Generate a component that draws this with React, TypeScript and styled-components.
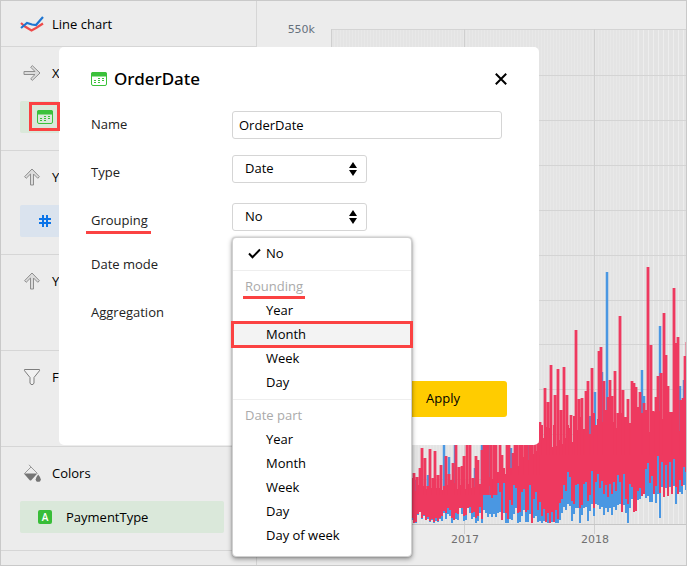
import React, { useState } from "react";
import styled, { createGlobalStyle, css } from "styled-components";

const GlobalStyle = createGlobalStyle`
  * { box-sizing: border-box; }
  body {
    margin: 0;
    background: #ececec;
    color: #000;
    font: 13px/20px "Open Sans", "Noto Sans", sans-serif;
  }
  button, input, select { font: inherit; color: inherit; }
`;

const ACCENT = "#fb4242";
const LINE = "#d6d6d6";

const Page = styled.div`
  position: relative;
  display: flex;
  min-height: 100vh;
  border: 1px solid #c9c9c9;
  overflow: hidden;
`;

const Sidebar = styled.aside`
  flex: 0 0 256px;
  border-right: 1px solid ${LINE};
`;

const ChartKind = styled.button`
  display: flex;
  align-items: center;
  gap: 8px;
  width: 100%;
  height: 46px;
  padding: 0 19px;
  border: 0;
  border-bottom: 1px solid ${LINE};
  background: none;
`;

const Section = styled.section`
  min-height: 96px;
  padding: 14px 32px 17px 19px;
  border-bottom: 1px solid ${LINE};
`;

const SectionTitle = styled.h2`
  display: flex;
  align-items: center;
  gap: 8px;
  height: 24px;
  margin: 0;
  font-size: 13px;
  font-weight: 400;
`;

const IconSlot = styled.span`
  display: flex;
  justify-content: center;
  width: 24px;
`;

const Field = styled.button<{ $tone: "green" | "blue" }>`
  display: flex;
  align-items: center;
  gap: 13px;
  width: 100%;
  height: 32px;
  margin-top: 16px;
  padding: 0 17px;
  border: 0;
  border-radius: 2px;
  background: ${(p) => (p.$tone === "green" ? "#dae8da" : "#dae3ee")};
`;

const FieldIcon = styled.span`
  position: relative;
  display: flex;
  justify-content: center;
  width: 16px;
`;

const IconFrame = styled.span`
  position: absolute;
  z-index: 3;
  inset: -8px -7px -7px -8px;
  border: 3px solid ${ACCENT};
`;

const ChartArea = styled.main`
  flex: 1;
  min-width: 0;
`;

const ChartSvg = styled.svg`
  display: block;
  width: 100%;
  height: 564px;
`;

const Overlay = styled.div`
  position: absolute;
  inset: 0;
  z-index: 2;
  padding: 46px 58px;
  pointer-events: none;
`;

const Dialog = styled.form`
  width: 480px;
  max-width: 100%;
  padding: 16px 32px 28px;
  border-radius: 5px;
  background: #fff;
  pointer-events: auto;
`;

const DialogHead = styled.header`
  display: flex;
  align-items: center;
  gap: 7px;
  height: 32px;
  margin-bottom: 16px;
`;

const DialogTitle = styled.h1`
  flex: 1;
  margin: 0;
  font-family: "Noto Sans", sans-serif;
  font-size: 17px;
  line-height: 24px;
  font-weight: 500;
`;

const CloseButton = styled.button`
  display: flex;
  padding: 0;
  border: 0;
  background: none;
`;

const Row = styled.div<{ $height: number }>`
  display: grid;
  grid-template-columns: 141px 1fr;
  align-items: start;
  height: ${(p) => p.$height}px;
`;

const Label = styled.label<{ $low?: boolean; $marked?: boolean }>`
  position: relative;
  justify-self: start;
  color: #222;
  line-height: ${(p) => (p.$low ? 34 : 26)}px;
  ${(p) =>
    p.$marked &&
    css`
      &::after {
        content: "";
        position: absolute;
        inset: 28px -3px auto -5px;
        height: 3px;
        background: ${ACCENT};
      }
    `}
`;

const box = css`
  height: 28px;
  border: 1px solid #d5d5d5;
  border-radius: 3px;
  background: #fff;
`;

const TextInput = styled.input`
  ${box}
  width: 270px;
  padding: 0 6px;
`;

const SelectWrap = styled.div`
  position: relative;
  width: 135px;
`;

const Select = styled.select`
  ${box}
  display: block;
  width: 100%;
  padding: 0 12px 2px;
  appearance: none;
`;

const SelectArrows = styled.svg`
  position: absolute;
  top: 7px;
  right: 10px;
  pointer-events: none;
`;

const Menu = styled.div`
  position: absolute;
  top: 34px;
  left: 0;
  z-index: 4;
  width: 180px;
  padding: 3px 0 9px;
  border: 1px solid #d0d0d0;
  border-radius: 4px;
  background: #fff;
  box-shadow: 0 0 2px rgba(0, 0, 0, 0.25), 0 2px 5px rgba(0, 0, 0, 0.4);
`;

const MenuGroup = styled.div`
  & + & {
    margin-top: 5px;
    padding-top: 3px;
    border-top: 1px solid #eee;
  }
`;

const GroupTitle = styled.div`
  display: table;
  position: relative;
  margin-left: 12px;
  color: #aaa;
  line-height: 24px;
`;

const GroupMark = styled.span`
  position: absolute;
  inset: 22px -2px auto;
  height: 3px;
  background: ${ACCENT};
`;

const MenuItem = styled.button<{ $marked?: boolean }>`
  position: relative;
  display: flex;
  align-items: center;
  width: 100%;
  height: 24px;
  padding: 0;
  border: 0;
  background: ${(p) => (p.$marked ? "#f3f3f3" : "none")};
  ${(p) =>
    p.$marked &&
    css`
      &::after {
        content: "";
        position: absolute;
        inset: -1px -2px -2px;
        border: 3px solid ${ACCENT};
      }
    `}
`;

const CheckSlot = styled.span`
  display: flex;
  width: 33px;
  padding-left: 15px;
`;

const Footer = styled.footer`
  display: flex;
  justify-content: flex-end;
  margin-top: 34px;
`;

const ApplyButton = styled.button`
  width: 128px;
  height: 36px;
  padding: 0 0 2px;
  border: 0;
  border-radius: 3px;
  background: #ffcc00;
`;

const CalendarIcon = () => (
  <svg width="16" height="14" viewBox="0 0 16 14" aria-hidden="true">
    <rect x="0.5" y="0.5" width="15" height="13" rx="1.5" fill="none" stroke="#3bc13b" />
    <path d="M0 4.500V2a2 2 0 0 1 2-2h12a2 2 0 0 1 2 2v2.500z" fill="#3bc13b" />
    <path
      d="M7 6.500h2M11 6.500h2M3 8.500h2M7 8.500h2M11 8.500h2M3 10.500h2M7 10.500h2"
      stroke="#3bc13b"
    />
  </svg>
);

const LineChartIcon = () => (
  <svg width="24" height="16" viewBox="0 0 24 16" fill="none" aria-hidden="true">
    <path d="M1 7l4 3.500 6.500 4L16 12l7-4.500" stroke="#ee4b4b" strokeWidth="2.200" />
    <path d="M1 12l6-5 5 1.500 4 .5L23 1" stroke="#1f75d1" strokeWidth="2.200" />
  </svg>
);

const ArrowIcon = ({ up }: { up?: boolean }) => (
  <svg width="18" height="18" viewBox="0 0 18 18" aria-hidden="true">
    <path
      d="M1 7.500h11L7.700 3.200l1.600-1.600L17 9l-7.700 7.400-1.600-1.600L12 10.500H1z"
      transform={up ? "rotate(-90 9 9)" : undefined}
      fill="#dcdcdc"
      stroke="#8e8e8e"
      strokeLinejoin="round"
    />
  </svg>
);

const FunnelIcon = () => (
  <svg width="18" height="18" viewBox="0 0 18 18" aria-hidden="true">
    <path
      d="M1.500 1.500h15v1.200L11 9.500V15l-1 1.500H8L7 15V9.500L1.500 2.700z"
      fill="#f1f1f1"
      stroke="#7d7d7d"
      strokeLinejoin="round"
    />
  </svg>
);

const BucketIcon = () => (
  <svg width="18" height="18" viewBox="0 0 18 18" aria-hidden="true">
    <path d="M1.500 9.500L8 3l6.500 6.500M8 3L6 .8" fill="none" stroke="#9a9a9a" />
    <path d="M.8 9.500h13.500L8.500 16q-1 1-2 0z" fill="#757575" />
    <path d="M15.200 10.500q2.600 3.200 2.600 4.700a2.500 2.500 0 0 1-5.100 0q0-1.500 2.500-4.700z" fill="#757575" />
  </svg>
);

const HashIcon = () => (
  <svg width="12" height="12" viewBox="0 0 12 12" aria-hidden="true">
    <path d="M4 0v12M8 0v12M0 4h12M0 8h12" stroke="#0b74e8" strokeWidth="2" />
  </svg>
);

const Badge = styled.span`
  width: 14px;
  height: 14px;
  border-radius: 2px;
  background: #38bd38;
  color: #fff;
  font-size: 10px;
  line-height: 14px;
  font-weight: 600;
  text-align: center;
`;

const CloseIcon = () => (
  <svg width="12" height="12" viewBox="0 0 12 12" aria-hidden="true">
    <path d="M.8.8l10.400 10.400M11.200.8L.8 11.200" stroke="#000" strokeWidth="2" />
  </svg>
);

const CheckIcon = () => (
  <svg width="13" height="11" viewBox="0 0 13 11" aria-hidden="true">
    <path d="M1 5.500l3.500 3.700L12 1.500" fill="none" stroke="#000" strokeWidth="2" />
  </svg>
);

const Arrows = () => (
  <SelectArrows width="8" height="14" viewBox="0 0 8 14" aria-hidden="true">
    <path d="M4 0l4 6H0zM4 14l4-6H0z" />
  </SelectArrows>
);

/* Peaks of the series, as x and y in the coordinates of the chart. */
const redPeaks: [number, number][] = [
  [412, 478], [414, 473], [417, 477], [420, 468], [422, 448], [425, 458], [428, 486], [430, 449],
  [433, 478], [435, 451], [438, 475], [441, 465], [446, 456], [449, 474], [451, 480], [453, 463],
  [456, 432], [459, 467], [462, 466], [464, 456], [467, 430], [470, 425], [473, 478], [476, 456],
  [478, 460], [482, 450], [484, 420], [486, 424], [488, 440], [491, 415], [494, 422], [496, 428],
  [500, 420], [502, 455], [507, 437], [509, 428], [513, 453], [515, 430], [517, 425], [520, 420],
  [522, 440], [525, 430], [527, 400], [530, 440], [532, 420], [535, 420], [538, 443], [540, 422],
  [543, 438], [545, 388], [548, 402], [551, 365], [555, 395], [558, 369], [561, 410], [564, 367],
  [567, 395], [571, 415], [576, 330], [579, 399], [582, 398], [586, 391], [588, 381], [592, 368],
  [599, 351], [601, 347], [604, 381], [606, 410], [608, 397], [610, 380], [612, 396], [615, 371],
  [618, 413], [620, 316], [623, 390], [626, 417], [628, 399], [632, 381], [634, 383], [636, 387],
  [638, 407], [640, 392], [644, 403], [646, 410], [648, 267], [651, 345], [653, 411], [656, 397],
  [658, 376], [661, 373], [664, 313], [666, 355], [668, 386], [670, 412], [674, 288], [676, 343],
  [678, 337], [681, 400], [683, 398], [685, 356], [687, 342],
];

const bluePeaks: [number, number][] = [
  [416, 480], [428, 475], [444, 430], [449, 457], [455, 428], [475, 468], [482, 425], [490, 432],
  [511, 448], [528, 420], [590, 416], [595, 392], [602, 372], [607, 272], [642, 370], [644, 396],
  [655, 414], [660, 326], [680, 386], [684, 380],
];

const columns = Array.from({ length: 139 }, (_, i) => 411 + i * 2);

const swing = (i: number, salt: number) => ((i * 37 + salt * 53 + ((i * i * 7) % 29)) % 31) / 31 - 0.5;

const bodyLevel = (x: number) => {
  if (x < 480) return 486;
  if (x < 540) return 484 - (x - 480) * 0.6;
  if (x < 600) return 438 - (x - 540) * 0.25;
  return 422;
};

const redFloor = (x: number) => {
  if (x < 440) return 519;
  if (x < 480) return 514;
  if (x < 560) return 504;
  if (x < 640) return 493;
  return 478;
};

const blueFloor = (x: number) => (x < 560 ? 518 : x < 630 ? 509 : x < 660 ? 499 : 490);

const body = columns.map((x, i) => [x, Math.round(bodyLevel(x) + swing(i, 8) * (x < 540 ? 10 : 28))]);
const redLows = columns.map((x, i) => [
  x,
  Math.min(523, Math.round(redFloor(x) + swing(i, 2) * (x < 480 ? 14 : 44))),
]);
const blueLows = columns.map((x, i) => [
  x,
  Math.min(523, Math.round(blueFloor(x) + swing(i, 5) * (i % 4 ? 14 : 40))),
]);

const areaPath = (top: number[][], low: number[][]) =>
  "M" + top.map(([x, y]) => `${x} ${y}H${x + 2}`).join("L") +
  [...low].reverse().map(([x, y]) => `L${x + 2} ${y}H${x}`).join("") + "Z";

const spikes = (peaks: number[][]) =>
  peaks.map(([x, y]) => `M${x} ${y}V${x < 500 ? 495 : x < 540 ? 475 : 455}`).join("");

const levels = [75, 120, 165, 210, 255, 300, 344, 389, 434, 479];

const Chart = () => (
  <ChartSvg role="img" aria-label="Line chart of orders by date">
    <defs>
      <pattern id="days" x="331" width="3" height="8" patternUnits="userSpaceOnUse">
        <rect width="3" height="8" fill="#e4e4e4" />
        <rect width="1" height="8" fill="#e8e8e8" />
      </pattern>
      <pattern id="weeks" x="638" width="5" height="8" patternUnits="userSpaceOnUse">
        <rect width="5" height="8" fill="#e3e3e3" />
        <rect width="1" height="8" fill="#ededed" />
      </pattern>
    </defs>
    <g transform="translate(-257 -1)">
      <rect x="331" y="29" width="307" height="495" fill="url(#days)" />
      <rect x="638" y="29" width="2000" height="495" fill="url(#weeks)" />
      <path
        d={"M331 29.500H2600" + levels.map((y) => `M331 ${y}.500H2600`).join("")}
        stroke="#d4d4d4"
      />
      <path d="M331.500 29V534M464.500 29V534M594.500 29V534" stroke="#cfcfcf" />
      <path d={spikes(bluePeaks)} stroke="#4a97e2" strokeWidth="2.500" />
      <path d={areaPath(body, blueLows)} fill="#4a97e2" />
      <path d={areaPath(body, redLows)} fill="#ee395f" />
      <path d={spikes(redPeaks)} stroke="#ee395f" strokeWidth="2.800" />
      <path d="M331 524.500H2600" stroke="#c6c6c6" />
      <g fontFamily="DejaVu Sans, sans-serif" fontSize="11" fill="#707070">
        <text x="465" y="543" textAnchor="middle">2017</text>
        <text x="595" y="543" textAnchor="middle">2018</text>
        <text x="315" y="33" textAnchor="end" fill="#66717d">550k</text>
      </g>
    </g>
  </ChartSvg>
);

const rounding = ["Year", "Month", "Week", "Day"];
const dateParts = ["Year", "Month", "Week", "Day", "Day of week"];

const Item = ({ text, checked, marked }: { text: string; checked?: boolean; marked?: boolean }) => (
  <MenuItem type="button" role="option" aria-selected={!!checked} $marked={marked}>
    <CheckSlot>{checked && <CheckIcon />}</CheckSlot>
    {text}
  </MenuItem>
);

export default function App() {
  const [name, setName] = useState("OrderDate");
  return (
    <>
      <GlobalStyle />
      <Page>
        <Sidebar>
          <ChartKind type="button">
            <LineChartIcon />
            Line chart
          </ChartKind>
          <Section>
            <SectionTitle><IconSlot><ArrowIcon /></IconSlot>X</SectionTitle>
            <Field type="button" $tone="green" aria-label="OrderDate">
              <FieldIcon><CalendarIcon /><IconFrame /></FieldIcon>
            </Field>
          </Section>
          <Section>
            <SectionTitle><IconSlot><ArrowIcon up /></IconSlot>Y</SectionTitle>
            <Field type="button" $tone="blue" aria-label="Measure">
              <FieldIcon><HashIcon /></FieldIcon>
            </Field>
          </Section>
          <Section>
            <SectionTitle><IconSlot><ArrowIcon up /></IconSlot>Y2</SectionTitle>
          </Section>
          <Section>
            <SectionTitle><IconSlot><FunnelIcon /></IconSlot>Filters</SectionTitle>
          </Section>
          <Section>
            <SectionTitle><IconSlot><BucketIcon /></IconSlot>Colors</SectionTitle>
            <Field type="button" $tone="green">
              <FieldIcon><Badge>A</Badge></FieldIcon>
              PaymentType
            </Field>
          </Section>
        </Sidebar>

        <ChartArea>
          <Chart />
        </ChartArea>

        <Overlay>
          <Dialog role="dialog" aria-labelledby="dialog-title" onSubmit={(e) => e.preventDefault()}>
            <DialogHead>
              <CalendarIcon />
              <DialogTitle id="dialog-title">OrderDate</DialogTitle>
              <CloseButton type="button" aria-label="Close"><CloseIcon /></CloseButton>
            </DialogHead>
            <Row $height={44}>
              <Label htmlFor="name">Name</Label>
              <TextInput id="name" value={name} onChange={(e) => setName(e.target.value)} />
            </Row>
            <Row $height={48}>
              <Label htmlFor="type" $low>Type</Label>
              <SelectWrap>
                <Select id="type"><option>Date</option></Select>
                <Arrows />
              </SelectWrap>
            </Row>
            <Row $height={48}>
              <Label htmlFor="grouping" $low $marked>Grouping</Label>
              <SelectWrap>
                <Select id="grouping"><option>No</option></Select>
                <Arrows />
                <Menu role="listbox" aria-label="Grouping">
                  <MenuGroup>
                    <Item text="No" checked />
                  </MenuGroup>
                  <MenuGroup role="group" aria-label="Rounding">
                    <GroupTitle>Rounding<GroupMark /></GroupTitle>
                    {rounding.map((t) => <Item key={t} text={t} marked={t === "Month"} />)}
                  </MenuGroup>
                  <MenuGroup role="group" aria-label="Date part">
                    <GroupTitle>Date part</GroupTitle>
                    {dateParts.map((t) => <Item key={t} text={t} />)}
                  </MenuGroup>
                </Menu>
              </SelectWrap>
            </Row>
            <Row $height={48}><Label as="span">Date mode</Label></Row>
            <Row $height={48}><Label as="span">Aggregation</Label></Row>
            <Footer>
              <ApplyButton type="submit">Apply</ApplyButton>
            </Footer>
          </Dialog>
        </Overlay>
      </Page>
    </>
  );
}
